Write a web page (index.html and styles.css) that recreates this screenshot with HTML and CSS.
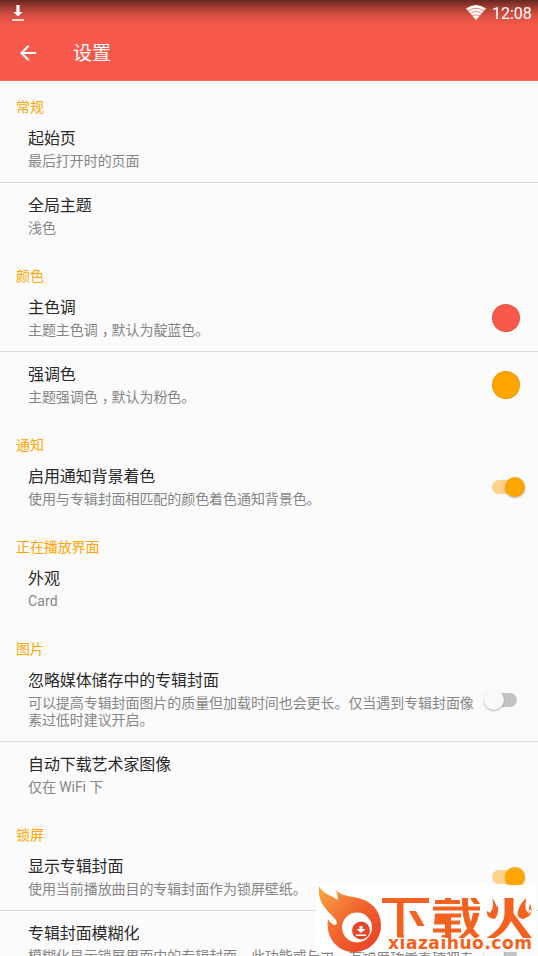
FILE: index.html
```html
<!DOCTYPE html>
<html lang="zh-CN">
<head>
<meta charset="utf-8">
<title>设置</title>
<link rel="stylesheet" href="styles.css">
</head>
<body>
<header class="appbar">
  <div class="status">
    <svg class="dl" width="12" height="17" viewBox="0 0 12 17"><path fill="#fff" d="M4.400 0h3.200v7H10.500L6 11.500 1.500 7h2.900zM0 14.300h12v1.500H0z"/></svg>
    <div class="status-right">
      <svg width="20" height="16" viewBox="0 0 20 16"><path fill="#fff" d="M0 3.600Q10-3.400 20 3.600L10 15z"/><path fill="none" stroke="#e8695d" stroke-width=".8" d="M2 6Q10 0.500 18 6M4 8.500Q10 4.500 16 8.500M6 11Q10 8.300 14 11"/></svg>
      <span class="clock">12:08</span>
    </div>
  </div>
  <div class="toolbar">
    <svg width="16" height="16" viewBox="0 0 16 16"><path fill="none" stroke="#fff" stroke-width="2" d="M16 8H1.500M8.700.700L1.400 8l7.300 7.300"/></svg>
    <h1>设置</h1>
  </div>
</header>
<main>
  <section>
    <h2>常规</h2>
    <div class="item"><div class="text"><h3>起始页</h3><p>最后打开时的页面</p></div></div>
    <div class="item"><div class="text"><h3>全局主题</h3><p>浅色</p></div></div>
  </section>
  <section>
    <h2>颜色</h2>
    <div class="item"><div class="text"><h3>主色调</h3><p>主题主色调<span class="comma">，</span>默认为靛蓝色。</p></div><i class="dot red"></i></div>
    <div class="item"><div class="text"><h3>强调色</h3><p>主题强调色<span class="comma">，</span>默认为粉色。</p></div><i class="dot amber"></i></div>
  </section>
  <section>
    <h2>通知</h2>
    <div class="item"><div class="text"><h3>启用通知背景着色</h3><p>使用与专辑封面相匹配的颜色着色通知背景色。</p></div><i class="switch on"></i></div>
  </section>
  <section>
    <h2>正在播放界面</h2>
    <div class="item"><div class="text"><h3>外观</h3><p class="latin">Card</p></div></div>
  </section>
  <section>
    <h2>图片</h2>
    <div class="item"><div class="text"><h3>忽略媒体储存中的专辑封面</h3><p>可以提高专辑封面图片的质量但加载时间也会更长。仅当遇到专辑封面像<br>素过低时建议开启。</p></div><i class="switch"></i></div>
    <div class="item"><div class="text"><h3>自动下载艺术家图像</h3><p>仅在 WiFi 下</p></div></div>
  </section>
  <section>
    <h2>锁屏</h2>
    <div class="item"><div class="text"><h3>显示专辑封面</h3><p>使用当前播放曲目的专辑封面作为锁屏壁纸。</p></div><i class="switch on"></i></div>
    <div class="item"><div class="text"><h3>专辑封面模糊化</h3><p>模糊化显示锁屏界面内的专辑封面。此功能或与第三方锁屏场景置插独差</p></div><i class="switch low"></i></div>
  </section>
</main>
<div class="watermark">
  <svg width="220" height="67" viewBox="316 885 220 67">
    <defs><linearGradient id="flame" x1="0" y1="0" x2="1" y2="1"><stop offset="0" stop-color="#f9a840"/><stop offset=".5" stop-color="#f2642f"/><stop offset="1" stop-color="#e93c24"/></linearGradient></defs>
    <path fill="url(#flame)" d="M319 886C322 893 332 896 338 900Q338 895 336 890C341 896 350 896 358 898C372 901 381 912 381 925A26.500 26.500 0 0 1 354 952C338 952 325 938 328 919Q331 925 336 925Q338 922 335 919C329 911 317 904 319 886z"/>
    <circle cx="357" cy="927.500" r="15" fill="#fff"/>
    <circle cx="361" cy="930.500" r="9" fill="#e8482a"/>
    <path fill="#fff" d="M359.500 926h3v3h3l-4.500 4-4.500-4h3zM356 934.500h10v1.500H356z"/>
    <g fill="#f46220">
      <path d="M382 898h47v5H403.500v34.500H397V903H382zM409 911h7l8.500 15h-7z"/>
      <path d="M435 900h10v-2h6v2h9v4H435zM433 906.500h47v4H433zM435 913.500h26v4H451v3h9v4h-9v4h10v4H451v5.500h-6V932.500H433v-4h12v-4H434zM462 898h6C468 918 471 929 480 936l-5 2.500C465 930 462 918 462 898zM473 913h6.500Q476 930 464 938h-6Q471 928 473 913zM470 898h6l4 6h-6z"/>
      <path d="M504.500 898h9v15.500L532 938h-9l-12-17Q506 932 495 938h-8.500Q504 927 504.500 914z"/>
      <path d="M492 898Q501 909 494.500 919Q486 918 487 911L490 913Q495 907 492 898zM497 905Q500 912 495 919zM526.500 898Q520 903 518 911Q516 918 523 919Q533 916 531 909L527 912Q524 908 526.500 898zM530 903L532 911L528 914z"/>
    </g>
  </svg>
  <span class="site">xiazaihuo.com</span>
</div>
</body>
</html>
```

FILE: styles.css
```css
* { box-sizing: border-box; margin: 0; padding: 0; }
html, body { height: 956px; overflow: hidden; }
body { position: relative; background: #fbfbfb; font-family: Roboto, "Noto Sans CJK SC", sans-serif; }
svg { display: block; }
.appbar { height: 81px; color: #fff; background: linear-gradient(#652821 0, #a33b31 7px, #d64e42 15px, #f75a4a 26px); border-bottom: 1px solid #f96f62; }
.status { height: 26px; display: flex; justify-content: space-between; padding: 5px 6px 0 12px; }
.status-right { display: flex; gap: 6px; }
.clock { font-size: 16px; line-height: 17px; width: 40px; white-space: nowrap; }
.toolbar { height: 54px; display: flex; align-items: center; gap: 37px; padding-left: 20px; }
h1 { font-size: 19px; font-weight: 400; line-height: 24px; padding-top: 2px; }
h2 { height: 35px; padding: 18px 16px 0; font-size: 14px; line-height: 16px; font-weight: 400; color: #ffa500; letter-spacing: -.1px; }
.item { display: flex; align-items: center; padding: 13px 18px 12px 28px; border-bottom: 1px solid #dedede; }
.item:last-child { border-color: transparent; }
.text { flex: 1; min-width: 0; }
h3 { font-size: 16px; line-height: 19px; font-weight: 400; color: #2a2a2a; letter-spacing: -.1px; }
p { margin-top: 5px; font-size: 14px; line-height: 17px; color: #868686; white-space: nowrap; letter-spacing: -.07px; }
.comma { position: relative; left: 4px; }
.latin { letter-spacing: .1px; }
.dot { width: 28px; height: 28px; border-radius: 50%; border: 1px solid rgba(0,0,0,.08); margin-top: -1px; }
.red { background: #f75a4a; }
.amber { background: #ffa500; }
.switch { display: flex; align-items: center; width: 26px; height: 14px; border-radius: 7px; background: #c3c3c3; margin: -1px 3px 0 0; }
.switch::before { content: ""; flex: none; width: 20px; height: 20px; border-radius: 50%; background: #fafafa; box-shadow: 0 1px 2px rgba(0,0,0,.3); margin-left: -7px; }
.switch.on { background: #fdd28c; margin-right: 2px; margin-left: -2px; }
.switch.on::before { background: #ffa500; margin-left: 13px; }
.switch.low { margin-top: 19px; }
.watermark { position: absolute; left: 316px; top: 885px; width: 220px; height: 67px; background: #fff; }
.site { position: absolute; left: 72px; top: 48px; font: bold 17px/20px "DejaVu Sans", sans-serif; letter-spacing: .55px; color: #f46220; white-space: nowrap; }
```
